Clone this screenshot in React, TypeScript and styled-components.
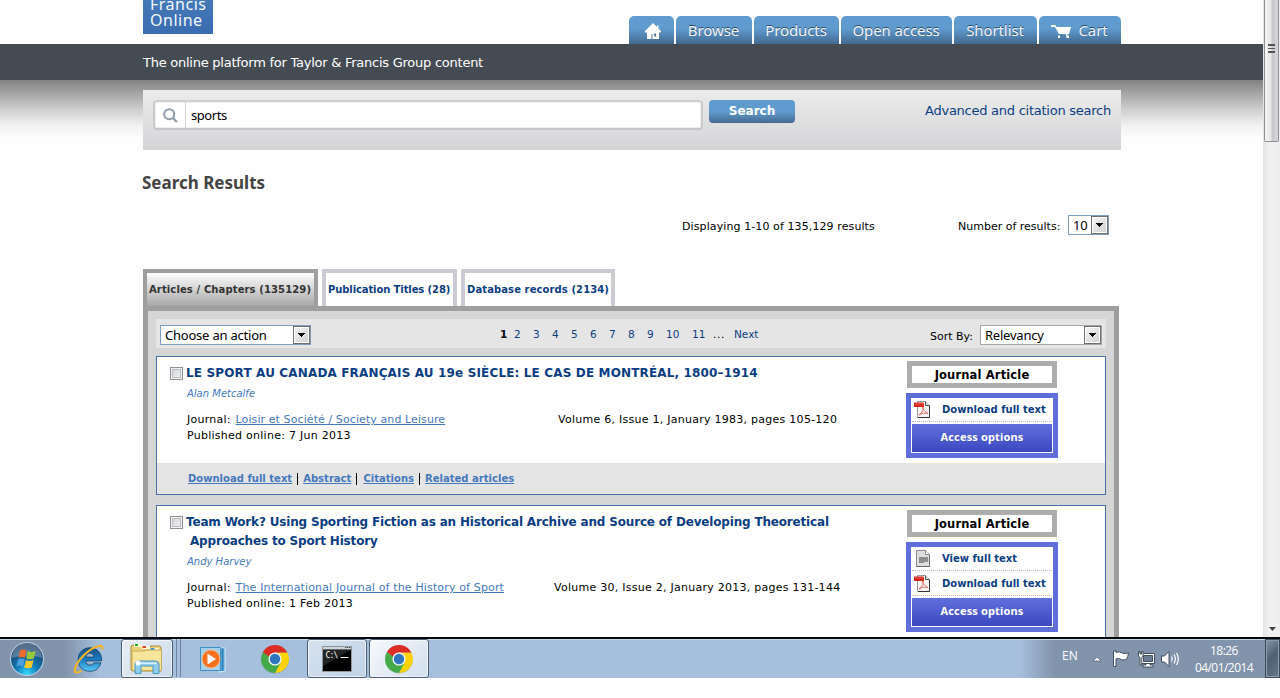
import React from 'react';
import styled, { createGlobalStyle, css } from 'styled-components';

const Global = createGlobalStyle`
  * { box-sizing: border-box; }
  body { margin: 0; background: #fefefe; overflow: hidden; font-family: "DejaVu Sans", sans-serif; color: #000; }
  a { color: inherit; text-decoration: none; }
`;
const navy = '#0b3d82';
const link = '#4478bd';

const Browser = styled.div`
  display: flex;
  width: 1280px;
  height: 637px;
  overflow: hidden;
`;
const Page = styled.main`
  width: 1263px;
  flex: none;
`;
const column = css`
  width: 978px;
  margin-left: 143px;
`;
const Header = styled.header`
  ${column}
  height: 44px;
  display: flex;
  justify-content: space-between;
  overflow: hidden;
`;
const Logo = styled.div`
  width: 70px;
  height: 34px;
  padding-left: 7px;
  background: linear-gradient(#4479b8, #3a6cb0);
  color: #f4f7fb;
  font: 16px/15px "Noto Sans", sans-serif;
  letter-spacing: 0.5px;
  span { display: block; width: 60px; margin-top: -3px; }
  span + span { margin-top: 1px; }
`;
const Nav = styled.nav`
  display: flex;
  align-items: flex-end;
  gap: 2px;
`;
const NavTab = styled.a<{ $w: number }>`
  width: ${p => p.$w}px;
  height: 28px;
  padding-right: 1px;
  display: flex;
  align-items: center;
  justify-content: center;
  gap: 7px;
  border-radius: 5px 5px 0 0;
  background: linear-gradient(#609bcf 0%, #609bcf 45%, #41698f 100%);
  color: #f2f5f8;
  font: 15px/28px "Noto Sans", sans-serif;
  letter-spacing: -0.1px;
  text-shadow: 0 -1px 0 #2b4a66;
  svg { margin-top: 3px; }
`;
const Tagline = styled.div`
  height: 36px;
  padding-left: 143px;
  background: #454b52;
  color: #fff;
  font-size: 13px;
  line-height: 37px;
  letter-spacing: -0.25px;
`;
const Shade = styled.section`
  height: 70px;
  padding-top: 10px;
  background: linear-gradient(#838182 0, #a5a4a4 13px, #cfcfcf 30px, #f1f1f1 45px, #fbfbfb 57px, #fefefe 57px);
`;
const SearchPanel = styled.form`
  ${column}
  height: 60px;
  padding: 10px 10px 0 10px;
  display: flex;
  align-items: flex-start;
  background: linear-gradient(#ececec, #d3d4d6);
`;
const SearchField = styled.div`
  width: 550px;
  height: 30px;
  margin-right: 6px;
  display: flex;
  border: 2px solid #c9cacb;
  border-top-color: #cfcfcf;
  border-bottom-color: #c4c5c7;
  border-radius: 4px;
  background: #fff;
  box-shadow: inset 0 0 1px 1px #efefef;
`;
const GlassBox = styled.span`
  width: 31px;
  display: flex;
  align-items: center;
  justify-content: center;
  border-right: 1px solid #cfd1d4;
`;
const Query = styled.span`
  padding-left: 5px;
  font: 13px/27px "Noto Sans", sans-serif;
  letter-spacing: -0.45px;
`;
const SearchButton = styled.button`
  width: 86px;
  height: 23px;
  padding: 0;
  border: 0;
  border-radius: 4px;
  background: linear-gradient(#609bcf 0%, #609bcf 50%, #43698d 100%);
  color: #fff;
  font: bold 12px/23px "DejaVu Sans", sans-serif;
  letter-spacing: 0;
`;
const Advanced = styled.a`
  margin-left: auto;
  color: ${navy};
  font-size: 13px;
  line-height: 22px;
  letter-spacing: -0.25px;
`;
const Title = styled.h1`
  ${column}
  margin-top: 0;
  margin-bottom: 0;
  height: 65px;
  color: #444;
  font: bold 17px/65px "Noto Sans", sans-serif;
  text-indent: -1px;
`;
const Summary = styled.div`
  ${column}
  height: 20px;
  display: flex;
  align-items: center;
  font-size: 11px;
`;
const Count = styled.span`
  width: 276px;
  margin-left: 539px;
  padding-top: 3px;
  letter-spacing: 0.1px;
`;
const Label = styled.span<{ $w: number; $top?: number }>`
  width: ${p => p.$w}px;
  padding-top: ${p => p.$top ?? 3}px;
  font-size: 11px;
  white-space: nowrap;
`;
const SelectBox = styled.div<{ $w: number; $border?: string }>`
  width: ${p => p.$w}px;
  height: 20px;
  display: flex;
  justify-content: space-between;
  border: 1px solid ${p => p.$border ?? '#7f9db9'};
  background: #fff;
  padding-left: 4px;
  font: 13px/18px "Noto Sans", sans-serif;
  letter-spacing: -0.22px;
`;
const Arrow = styled.span`
  width: 17px;
  height: 18px;
  display: flex;
  align-items: center;
  justify-content: center;
  border: 1px solid #707070;
  box-shadow: inset 0 0 0 1px #fff;
  background: linear-gradient(135deg, #f6f6f6, #cfcfcf);
`;
const Tabs = styled.div`
  margin: 34px 0 0 143px;
  display: flex;
  gap: 4px;
`;
const Tab = styled.a<{ $w: number; $active?: boolean; $ls: number }>`
  width: ${p => p.$w}px;
  height: 37px;
  border: 4px solid ${p => (p.$active ? '#9e9e9e' : '#cbcbd3')};
  border-bottom: 0;
  padding-left: 2px;
  background: ${p => (p.$active ? 'linear-gradient(#fdfdfd, #a8a8a8)' : '#fff')};
  color: ${p => (p.$active ? '#333' : navy)};
  font-size: 10px;
  font-weight: bold;
  line-height: 33px;
  letter-spacing: ${p => p.$ls}px;
  white-space: nowrap;
`;
const Panel = styled.section`
  width: 976px;
  height: 700px;
  margin-left: 143px;
  padding: 8px;
  border: 5px solid #9e9e9e;
  background: #d6d6d6;
`;
const Toolbar = styled.div`
  height: 29px;
  margin-bottom: 8px;
  padding: 6px 4px 0;
  display: flex;
  align-items: flex-start;
  background: #e5e5e5;
`;
const Pager = styled.div`
  width: 430px;
  margin-left: 189px;
  display: flex;
  font-size: 10.5px;
  line-height: 19px;
`;
const PageNo = styled.a<{ $w: number; $current?: boolean }>`
  width: ${p => p.$w}px;
  color: ${p => (p.$current ? '#000' : navy)};
  font-weight: ${p => (p.$current ? 'bold' : 'normal')};
  white-space: nowrap;
`;
const Gap = styled.span`
  width: 21px;
  letter-spacing: 0.6px;
`;
const Card = styled.article`
  min-height: 139px;
  margin-bottom: 10px;
  border: 1px solid #4a70a8;
  background: #fff;
`;
const CardBody = styled.div<{ $h: number }>`
  height: ${p => p.$h}px;
  padding: 4px 0 0 13px;
  display: flex;
`;
const Check = styled.span`
  flex: none;
  width: 13px;
  height: 13px;
  margin: 6px 3px 0 0;
  border: 1px solid #8e8f8f;
  box-shadow: inset 0 0 0 1px #f4f4f4, inset 0 0 0 2px #b8bcc2;
  background: linear-gradient(135deg, #cdd1d6, #f6f6f6);
`;
const Details = styled.div`
  width: 720px;
  flex: none;
  white-space: nowrap;
`;
const CardTitle = styled.h2<{ $ls: number }>`
  margin: 3px 0 0;
  color: ${navy};
  font: bold 12px/19px "DejaVu Sans", sans-serif;
  letter-spacing: ${p => p.$ls}px;
  white-space: pre;
`;
const Author = styled.div`
  margin-top: 3px;
  padding-left: 1px;
  color: ${link};
  font-size: 10px;
  font-style: italic;
  line-height: 16px;
  letter-spacing: 0;
`;
const Meta = styled.div`
  margin-top: 10px;
  padding-left: 1px;
  font-size: 11px;
  line-height: 16px;
  letter-spacing: 0.26px;
`;
const MetaRow = styled.div`
  display: flex;
`;
const MetaLeft = styled.div<{ $w: number }>`
  width: ${p => p.$w}px;
`;
const JournalLink = styled.a<{ $ls: number }>`
  margin-left: 1px;
  color: ${link};
  text-decoration: underline;
  letter-spacing: ${p => p.$ls}px;
`;
const Side = styled.div`
  width: 152px;
`;
const Kind = styled.div`
  width: 150px;
  height: 27px;
  margin: 0 1px 5px;
  border: 5px solid #adadad;
  font: bold 11.5px/18px "DejaVu Sans", sans-serif;
  letter-spacing: 0.15px;
  text-align: center;
`;
const AccessBox = styled.div`
  border: 5px solid #606edb;
  padding: 0 1px 1px;
  background: #fff;
`;
const AccessRow = styled.a`
  height: 25px;
  padding-left: 2px;
  display: flex;
  align-items: center;
  border-bottom: 1px dotted #bbb;
  color: ${navy};
  font-size: 10px;
  font-weight: bold;
  white-space: nowrap;
  &:first-child { height: 24px; }
  svg { flex: none; }
  span { margin-left: 11px; }
`;
const Options = styled.a`
  display: block;
  height: 28px;
  margin-top: 2px;
  background: linear-gradient(#606fdd, #3c48bf);
  color: #fff;
  font: bold 11px/26px "Noto Sans", sans-serif;
  letter-spacing: 0.15px;
  text-align: center;
`;
const CardFooter = styled.div`
  height: 31px;
  padding-left: 31px;
  display: flex;
  align-items: center;
  background: #e4e4e4;
  color: ${link};
  font-size: 10px;
  font-weight: bold;
  a { text-decoration: underline; letter-spacing: 0.02px; }
  a:nth-of-type(3) { margin-left: 1px; }
`;
const Bar = styled.i`
  width: 1px;
  height: 12px;
  margin: 0 5px;
  background: #000;
`;
const Scrollbar = styled.aside`
  width: 17px;
  height: 637px;
  display: flex;
  flex-direction: column;
  align-items: center;
  justify-content: space-between;
  border-left: 1px solid #e4e4e4;
  background: linear-gradient(90deg, #e6e6e6, #f1f1f1 30%, #eee);
`;
const Thumb = styled.div`
  width: 15px;
  height: 142px;
  padding-top: 44px;
  margin-right: 1px;
  border: 1px solid #8f8f8f;
  border-top: 0;
  border-radius: 0 0 2px 2px;
  background: linear-gradient(90deg, #f5f5f5, #e6e6e8 45%, #c6c7cb 55%, #d6d7da);
  display: flex;
  flex-direction: column;
  align-items: center;
  gap: 2px;
  i { width: 7px; height: 1.5px; background: #555; }
`;
const ScrollDown = styled.div`
  height: 15px;
  svg { display: block; }
`;

const Taskbar = styled.footer`
  width: 1280px;
  height: 41px;
  display: flex;
  border-top: 2px solid #06080b;
  box-shadow: inset 0 1px 0 #c6d7e8;
  background: linear-gradient(90deg, #8294ab 0, #8294ab 65px, #a6bfdc 100px, #a6bfdc 1020px, #8294ab 1054px);
`;
const TaskSlot = styled.div<{ $w: number; $glass?: number }>`
  width: ${p => p.$w}px;
  height: 39px;
  display: flex;
  align-items: center;
  justify-content: center;
  ${p => p.$glass && css`
    border: 1px solid #4a5d74;
    border-radius: 3px;
    box-shadow: inset 0 0 0 1px rgba(255, 255, 255, 0.65);
    background: linear-gradient(135deg, rgba(255, 255, 255, ${p.$glass}) 0%, rgba(255, 255, 255, ${p.$glass * 0.55}) 100%);
  `}
`;
const StackEdge = styled.i`
  width: 4px;
  height: 38px;
  border-right: 1px solid #6e84a0;
`;
const Tray = styled.div`
  margin-left: auto;
  display: flex;
  align-items: center;
  color: #fff;
  font: 12px/17px "Open Sans", sans-serif;
`;
const Lang = styled.span`
  width: 30px;
  margin-top: -6px;
  font-size: 12px;
`;
const Clock = styled.div`
  width: 70px;
  margin: 1px 6px 0 5px;
  text-align: center;
  letter-spacing: -0.55px;
`;
const ShowDesktop = styled.div`
  width: 15px;
  height: 39px;
  border: 1px solid #3a495b;
  box-shadow: inset 0 0 0 1px #8d9cae;
  background: linear-gradient(135deg, #8796a8, #4f6075 45%, #64758a);
`;

const Down = () => (
  <svg width="9" height="5" viewBox="0 0 9 5" shapeRendering="crispEdges"><path d="M1 0h7v1H1zM2 1h5v1H2zM3 2h3v1H3zM4 3h1v1H4z" /></svg>
);
const HomeShape = styled.svg`
  margin-left: 4px;
`;
const HomeIcon = () => (
  <HomeShape width="17" height="17" viewBox="0 0 17 17">
    <path d="M9 1 1 9v1h2v6h4v-5h3v5h4v-6h3V9l-3-3V3h-1v2z" fill="#5d6d7c" opacity=".6" />
    <path d="M8 0 0 8v1.500h2V16h4.500v-5h1v5H14V9.500h2V8l-2.500-2.500V2.500H12V4zM9 10.500h2v3H9z" fill="#fff" fillRule="evenodd" />
  </HomeShape>
);
const CartIcon = () => (
  <svg width="20" height="14" viewBox="0 0 20 14">
    <path d="M0 0h4.500l1 2H20l-2 7H8l-.7 1.500H9V13H7v-2l1-2L4 2H0z" fill="#fff" />
    <path d="M15 9h1.500v1.500H18V13h-2.500z" fill="#fff" />
  </svg>
);
const Glass = () => (
  <svg width="15" height="15" viewBox="0 0 15 15" fill="none" stroke="#8f9ba8">
    <circle cx="6.200" cy="6.200" r="5" strokeWidth="2" /><path d="m10 10 3.800 4" strokeWidth="2.200" />
  </svg>
);
const PdfIcon = () => (
  <svg width="17" height="17" viewBox="0 0 17 17">
    <path d="M3.500.5h8l4 4v12h-12z" fill="#f7f4f4" stroke="#999" />
    <path d="M11.500.5v4h4" fill="#ddd" stroke="#555" /><path d="M15.500 5v11.500H4" fill="none" stroke="#333" />
    <path d="M5 14c3-2 5-6 4-8.500-1-1-1 4 5 7-3-1-6 0-9 1.500z" fill="none" stroke="#e07060" />
    <path d="M0 1.500h9l1 1v3.500H0z" fill="#d8251c" /><path d="M1 2.500h8v1H1z" fill="#e8604f" />
  </svg>
);
const DocIcon = () => (
  <svg width="17" height="17" viewBox="0 0 17 17">
    <path d="M2.500.5h9l4 4v12h-13z" fill="#dedede" stroke="#888" />
    <path d="M11.500.5v4h4" fill="#fff" stroke="#888" />
    <path d="M5 7h9v5h-4v1H5z" fill="#8d8d8d" /><path d="M2.500 16.500h13V5" fill="none" stroke="#666" />
  </svg>
);
const StartOrb = () => (
  <svg width="36" height="36" viewBox="0 0 36 36">
    <defs>
      <radialGradient id="orb" cx=".5" cy=".95" r=".8"><stop offset="0" stopColor="#35e0ff" /><stop offset=".4" stopColor="#1380bd" /><stop offset="1" stopColor="#163a62" /></radialGradient>
    </defs>
    <circle cx="18" cy="18" r="16.500" fill="url(#orb)" stroke="#b4cbdc" strokeWidth="1.200" />
    <path d="M3 17a15 15 0 0 1 30 0c-8-3-22-3-30 0z" fill="#fff" opacity=".28" />
    <path d="M11 9.500c2.500-1.500 4.500-1.200 6.500 0L16 17c-2.500-1.300-4.500-1.200-6.500 0z" fill="#ef6a2e" />
    <path d="M18.700 10c2.300 1.300 5 1.300 8 0l-1.800 7.500c-2.500 1-5 1-7.500 0z" fill="#97c93d" />
    <path d="M9 18.500c2.200-1.300 4.500-1.200 6.700 0L14 25.500c-2-1.200-4-1.200-6.500 0z" fill="#4ba0e0" />
    <path d="M17 19c2.500 1.200 5 1.200 7.500 0l-1.800 7.500c-2.500 1-5 1-7.500 0z" fill="#fcc72c" />
  </svg>
);
const IeIcon = () => (
  <svg width="32" height="32" viewBox="0 0 34 34">
    <defs><linearGradient id="ie" x1="0" y1="0" x2="0" y2="1"><stop offset="0" stopColor="#1b4f80" /><stop offset=".5" stopColor="#1b7cc4" /><stop offset="1" stopColor="#55c8f5" /></linearGradient></defs>
    <path d="M31.500 19H14.500c.4 3 2 4.500 4.700 4.500 2 0 3.300-.9 4-2.400h7.500C29 27 25 30 19 30 11.500 30 6.500 25 6.500 17.800S11.500 5 19 5s12.800 5.500 12.500 14zM14.700 15h8.500c-.3-2.600-1.900-4-4.200-4s-3.900 1.400-4.300 4z" fill="url(#ie)" stroke="#113d66" strokeWidth=".8" />
    <path d="M32 7c1-3-.5-4.500-3.500-3.800C18 5.500 5 19 3 28c-.7 3.500 2 4.500 7 1.500" fill="none" stroke="#f3b521" strokeWidth="2.200" />
  </svg>
);
const FolderIcon = () => (
  <svg width="34" height="32" viewBox="0 0 34 32">
    <path d="M1 4q0-2 2-2h8l1 2h8v-1h9q2 0 2 2v23H3q-2 0-2-2z" fill="#ecd27a" stroke="#a88b3a" />
    <path d="M4 1h8v3H4zM12 3h8v3h-8zM20 5h9v3h-9z" fill="#fff8dc" />
    <path d="M5 1h3v2H5z" fill="#18b418" /><path d="M12.500 3h3.500v2h-3.500z" fill="#d84a28" /><path d="M20.500 5h4v2h-4z" fill="#3a8fe0" />
    <path d="M2 8h12l2-1h15.500v20.500H3q-1 0-1-2z" fill="#f7e59b" stroke="#c8ab52" />
    <path d="M5 30.500V21q0-3 4-3h16q4 0 4 3v9.500h-6V23H11v7.500z" fill="#8fcdec" stroke="#4d97c0" />
    <path d="M7 19.500h20V21H7z" fill="#d7f2fd" /><circle cx="8" cy="20" r="2.500" fill="#fff" opacity=".9" />
  </svg>
);
const PlayerShape = styled.svg`
  margin-left: 3px;
`;
const PlayerIcon = () => (
  <PlayerShape width="30" height="28" viewBox="0 0 30 28">
    <path d="M20 3h6v23l-6 1z" fill="#4e9fd0" stroke="#d7ecf8" /><path d="M1.500 2.500h20v23h-20z" fill="#a5d0ea" stroke="#3f92c6" /><path d="M23.500 3v23" stroke="#2a82b8" />
    <circle cx="12" cy="14" r="9" fill="#f3701e" stroke="#ffb37a" /><path d="M8.500 8.500 17 14l-8.500 5.500z" fill="#fff" />
  </PlayerShape>
);
const ChromeIcon = () => (
  <svg width="30" height="30" viewBox="0 0 30 30">
    <circle cx="15" cy="15.500" r="14" fill="#5a6f8a" opacity=".35" />
    <path d="M15 8.500h12.400A14 14 0 0 1 15 29l5.500-10.800z" fill="#fdd308" />
    <path d="M2.900 8A14 14 0 0 0 15 29l5.700-10.500L15 15l-6 3z" fill="#45ab48" />
    <path d="M2.900 8A14 14 0 0 1 27.400 8.500H15L9 14z" fill="#dd2c25" />
    <path d="M2.900 8 9 18.500 11 14z" fill="#45ab48" />
    <circle cx="15" cy="15" r="6.600" fill="#f0f4f7" /><circle cx="15" cy="15" r="5.200" fill="#2f75bd" />
  </svg>
);
const ConsoleIcon = () => (
  <svg width="30" height="26" viewBox="0 0 30 26">
    <path d="M.5.5h29v25H.5z" fill="#000" stroke="#8f979e" /><path d="M1 1h28v2.500H1z" fill="#ced4da" />
    <path d="M1 4h28L1 20z" fill="#444" opacity=".5" />
    <path d="M23 1.500h1.500M25 1.500h1.500M27 1.500h1.500" stroke="#555" /><path d="M18.500 11.500h8" stroke="#fff" />
    <text x="3.500" y="12" fill="#fff" fontFamily="DejaVu Sans Mono" fontSize="8" letterSpacing="-.8">C:\</text>
  </svg>
);
const TrayIcons = () => (
  <svg width="92" height="20" viewBox="0 0 92 20">
    <path d="m1 12 4-4 4 4z" fill="#fff" stroke="#4b5d72" strokeWidth=".7" />
    <g stroke="#34414f" strokeWidth=".9">
      <path d="M21.500 2h2.500v1.500c3-1.300 5-.2 6.500.6 1.800.9 3.800.6 6-.3-.3 3-1.200 5.200-2.300 6.700-2.800 1-4.700.2-5.700-.4-1.500-.9-3-.6-4.500-.2V17.500h-2.500z" fill="#fff" />
      <path d="M49.500 4.500h13v10h-13z" fill="#fff" /><path d="M51.500 6.500h9v6h-9z" fill="#6b7d92" />
      <path d="M54 14.500h4v1.500h3v2h-10v-2h3z" fill="#fff" />
      <path d="M46.500 2.500h1.500V5h1.500V2.500H51V7l-1.200 1.500V16h-1.800V8.500L46.500 7z" fill="#fff" />
      <path d="M69.500 7h3l4.500-4.500v15L72.500 13h-3z" fill="#fff" />
    </g>
    <path d="M79.500 7.500q1.500 2.500 0 5M82 5.500q2.700 4.500 0 9M84.500 4q3.700 6 0 12" fill="none" stroke="#fff" strokeWidth="1.200" />
  </svg>
);

const Select = ({ text, w, border }: { text: string; w: number; border?: string }) => (
  <SelectBox $w={w} $border={border}>{text}<Arrow><Down /></Arrow></SelectBox>
);

const pages: [string, number][] = [['1', 14], ['2', 19], ['3', 19], ['4', 19], ['5', 19], ['6', 19], ['7', 19], ['8', 19], ['9', 19], ['10', 26], ['11', 21]];

type Result = {
  title: string; ls: number; author: string; journal: string; jls: number; volume: string; leftWidth: number;
  date: string; view?: boolean; height: number;
};
const results: Result[] = [
  { title: 'LE SPORT AU CANADA FRANÇAIS AU 19e SIÈCLE: LE CAS DE MONTRÉAL, 1800–1914', ls: 0.15, author: 'Alan Metcalfe', journal: 'Loisir et Société / Society and Leisure', jls: 0.09, volume: 'Volume 6, Issue 1, January 1983, pages 105-120', leftWidth: 371, date: '7 Jun 2013', height: 106 },
  { title: 'Team Work? Using Sporting Fiction as an Historical Archive and Source of Developing Theoretical\n Approaches to Sport History', ls: -0.175, author: 'Andy Harvey', journal: 'The International Journal of the History of Sport', jls: 0.15, volume: 'Volume 30, Issue 2, January 2013, pages 131-144', leftWidth: 367, date: '1 Feb 2013', view: true, height: 150 },
];

const ResultCard = ({ r }: { r: Result }) => (
  <Card>
    <CardBody $h={r.height}>
      <Check />
      <Details>
        <CardTitle $ls={r.ls}>{r.title}</CardTitle>
        <Author>{r.author}</Author>
        <Meta>
          <MetaRow>
            <MetaLeft $w={r.leftWidth}>Journal: <JournalLink $ls={r.jls}>{r.journal}</JournalLink></MetaLeft>
            <span>{r.volume}</span>
          </MetaRow>
          <div>Published online: {r.date}</div>
        </Meta>
      </Details>
      <Side>
        <Kind>Journal Article</Kind>
        <AccessBox>
          {r.view && <AccessRow><DocIcon /><span>View full text</span></AccessRow>}
          <AccessRow><PdfIcon /><span>Download full text</span></AccessRow>
          <Options>Access options</Options>
        </AccessBox>
      </Side>
    </CardBody>
    <CardFooter>
      <a>Download full text</a><Bar /><a>Abstract</a><Bar /><a>Citations</a><Bar /><a>Related articles</a>
    </CardFooter>
  </Card>
);

export default function App() {
  return (
    <>
      <Global />
      <Browser>
        <Page>
          <Header>
            <Logo><span>Francis</span><span>Online</span></Logo>
            <Nav>
              <NavTab $w={45}><HomeIcon /></NavTab>
              <NavTab $w={76}>Browse</NavTab>
              <NavTab $w={85}>Products</NavTab>
              <NavTab $w={111}>Open access</NavTab>
              <NavTab $w={83}>Shortlist</NavTab>
              <NavTab $w={82}><CartIcon />Cart</NavTab>
            </Nav>
          </Header>
          <Tagline>The online platform for Taylor &amp; Francis Group content</Tagline>
          <Shade>
            <SearchPanel>
              <SearchField><GlassBox><Glass /></GlassBox><Query>sports</Query></SearchField>
              <SearchButton type="button">Search</SearchButton>
              <Advanced>Advanced and citation search</Advanced>
            </SearchPanel>
          </Shade>
          <Title>Search Results</Title>
          <Summary>
            <Count>Displaying 1-10 of 135,129 results</Count>
            <Label $w={110}>Number of results:</Label>
            <Select text="10" w={41} />
          </Summary>
          <Tabs>
            <Tab $w={175} $active $ls={0.12}>Articles / Chapters (135129)</Tab>
            <Tab $w={135} $ls={-0.1}>Publication Titles (28)</Tab>
            <Tab $w={154} $ls={0.1}>Database records (2134)</Tab>
          </Tabs>
          <Panel>
            <Toolbar>
              <Select text="Choose an action" w={151} />
              <Pager>
                {pages.map(([n, w]) => <PageNo key={n} $w={w} $current={n === '1'}>{n}</PageNo>)}
                <Gap>...</Gap>
                <PageNo $w={30}>Next</PageNo>
              </Pager>
              <Label $w={50} $top={5}>Sort By:</Label>
              <Select text="Relevancy" w={122} border="#a5a5a5" />
            </Toolbar>
            {results.map(r => <ResultCard key={r.author} r={r} />)}
          </Panel>
        </Page>
        <Scrollbar>
          <Thumb><i /><i /><i /></Thumb>
          <ScrollDown><svg width="9" height="12" viewBox="0 0 9 12"><path d="M1 5h7L4.500 9z" fill="#444" /></svg></ScrollDown>
        </Scrollbar>
      </Browser>
      <Taskbar>
        <TaskSlot $w={54}><StartOrb /></TaskSlot>
        <TaskSlot $w={67}><IeIcon /></TaskSlot>
        <TaskSlot $w={52} $glass={0.75}><FolderIcon /></TaskSlot>
        <StackEdge /><StackEdge />
        <TaskSlot $w={62}><PlayerIcon /></TaskSlot>
        <TaskSlot $w={64}><ChromeIcon /></TaskSlot>
        <TaskSlot $w={60} $glass={0.55}><ConsoleIcon /></TaskSlot>
        <TaskSlot $w={2} />
        <TaskSlot $w={60} $glass={0.9}><ChromeIcon /></TaskSlot>
        <Tray>
          <Lang>EN</Lang>
          <TrayIcons />
          <Clock>18:26<br />04/01/2014</Clock>
          <ShowDesktop />
        </Tray>
      </Taskbar>
    </>
  );
}
